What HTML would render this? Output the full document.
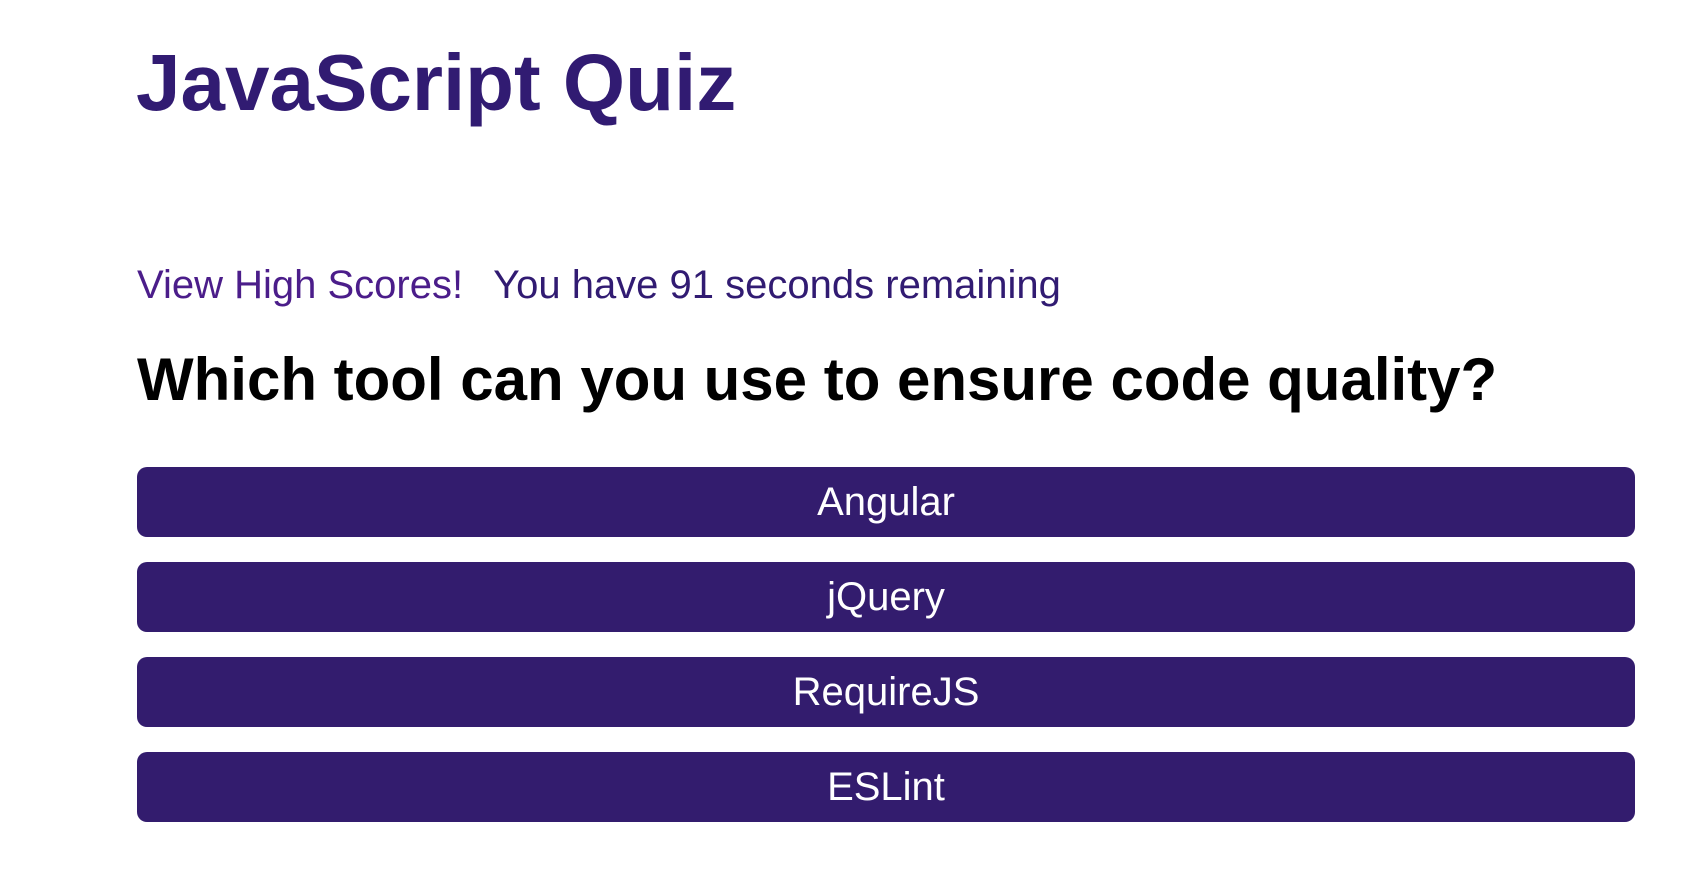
<!DOCTYPE html>
<html><head><meta charset="utf-8"><style>
body{margin:0;width:1704px;height:870px;background:#fff;font-family:"Liberation Sans",Arial,sans-serif;overflow:hidden;position:relative}
.t{position:absolute;left:136px;top:33px;font-size:80px;font-weight:bold;color:#311b72;line-height:100px;margin:0}
.s{position:absolute;left:137px;top:262px;font-size:40px;line-height:46px;white-space:nowrap}
.s .a{color:#4b1d8a}.s .b{color:#311b72;margin-left:30px}
.q{position:absolute;left:137px;top:345px;font-size:60px;font-weight:bold;color:#000;line-height:70px;margin:0;white-space:nowrap}
.btn{position:absolute;left:137px;width:1498px;height:70px;background:#331c6e;border-radius:10px;color:#fff;font-size:40px;text-align:center;line-height:70px}
</style></head><body>
<h1 class="t">JavaScript Quiz</h1>
<div class="s"><span class="a">View High Scores!</span><span class="b">You have 91 seconds remaining</span></div>
<h2 class="q">Which tool can you use to ensure code quality?</h2>
<div class="btn" style="top:467px">Angular</div>
<div class="btn" style="top:562px">jQuery</div>
<div class="btn" style="top:657px">RequireJS</div>
<div class="btn" style="top:752px">ESLint</div>
</body></html>
